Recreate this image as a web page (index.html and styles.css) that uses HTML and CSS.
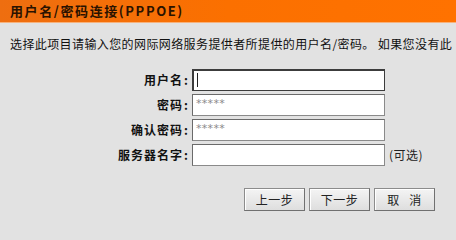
FILE: index.html
```html
<!DOCTYPE html>
<html lang="zh-CN">
<head>
<meta charset="utf-8">
<title>PPPOE</title>
<link rel="stylesheet" href="styles.css">
</head>
<body>
<div class="header">用户名/密码连接(PPPOE)</div>
<p class="desc">选择此项目请输入您的网际网络服务提供者所提供的用户名/密码。 如果您没有此</p>
<div class="form">
  <label class="lbl">用户名<span class="colon">:</span></label>
  <div class="field focused"><span class="caret"></span></div>
  <span></span>
  <label class="lbl">密码<span class="colon">:</span></label>
  <div class="field"><span class="stars">*****</span></div>
  <span></span>
  <label class="lbl">确认密码<span class="colon">:</span></label>
  <div class="field"><span class="stars">*****</span></div>
  <span></span>
  <label class="lbl">服务器名字<span class="colon">:</span></label>
  <div class="field"></div>
  <span class="opt">(可选)</span>
</div>
<div class="buttons">
  <button class="btn">上一步</button>
  <button class="btn">下一步</button>
  <button class="btn">取&nbsp;&nbsp;&nbsp;消</button>
</div>
</body>
</html>
```
FILE: styles.css
```css
html, body {
  margin: 0;
  padding: 0;
}
body {
  width: 456px;
  height: 235px;
  overflow: hidden;
  background: #e2e2e2;
  font-family: "Noto Sans CJK SC", "DejaVu Sans", sans-serif;
  font-size: 12px;
  color: #111;
}
.header {
  height: 22px;
  line-height: 22px;
  padding-left: 10px;
  background: linear-gradient(to right, #ee6e10, #fb7000 50%, #ff7200);
  border-bottom: 1px solid #f7b27c;
  font-weight: bold;
  font-size: 13px;
  letter-spacing: 1.6px;
  color: #2a1200;
}
.desc {
  margin: 12px 0 0 0;
  padding-left: 10px;
  height: 18px;
  line-height: 18px;
  white-space: nowrap;
  letter-spacing: 0.4px;
  color: #111;
}
.form {
  margin-top: 16px;
  display: grid;
  grid-template-columns: 188px 193px auto;
  column-gap: 4px;
  row-gap: 3.5px;
  align-items: center;
}
.lbl {
  text-align: right;
  font-weight: bold;
  font-size: 12px;
  color: #111;
  letter-spacing: 1px;
}
.colon {
  margin-left: 1px;
  letter-spacing: 0;
}
.field {
  box-sizing: border-box;
  height: 21.5px;
  background: #fff;
  border: 1px solid #8a8a8a;
  border-top-color: #6a6a6a;
  border-left-color: #6a6a6a;
  display: flex;
  align-items: center;
  padding-left: 3px;
}
.field.focused {
  border: 1px solid #3c3c3c;
  border-width: 2px 1px 1px 2px;
}
.caret {
  width: 1px;
  height: 14px;
  background: #222;
}
.stars {
  font-family: "DejaVu Sans", sans-serif;
  font-size: 11px;
  color: #8a8a8a;
  letter-spacing: 0.3px;
  margin-top: -3px;
}
.opt {
  color: #222;
  font-size: 12px;
  letter-spacing: 0.5px;
}
.buttons {
  margin: 22px 0 0 244px;
  display: flex;
  gap: 4px;
}
.btn {
  box-sizing: border-box;
  width: 61px;
  height: 23px;
  padding: 0;
  font-family: "Noto Sans CJK SC", sans-serif;
  font-size: 12px;
  letter-spacing: 0.5px;
  color: #222;
  background: linear-gradient(#f4f4f4, #dedede);
  border: 1px solid #8c8c8c;
  border-right-color: #707070;
  border-bottom-color: #707070;
  box-shadow: inset 1px 1px 0 #ffffff;
}
```
